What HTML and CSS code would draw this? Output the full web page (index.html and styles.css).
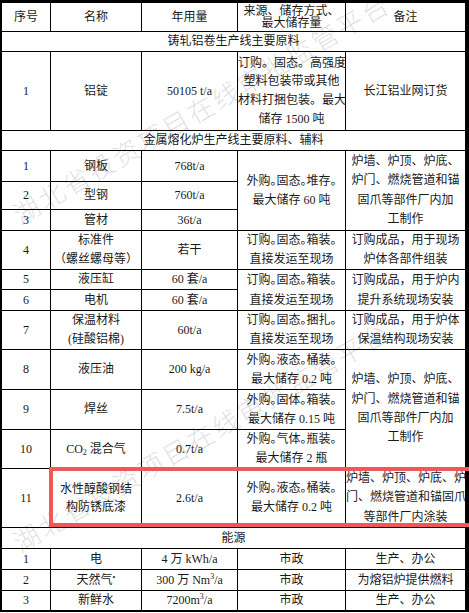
FILE: index.html
```html
<!DOCTYPE html>
<html lang="zh-CN">
<head>
<meta charset="utf-8">
<title>原辅材料表</title>
<link rel="stylesheet" href="styles.css">
</head>
<body>
<div class="page">
  <div class="wm wm1">湖北省投资项目在线审批监管平台</div>
  <div class="wm wm2">湖北省投资项目在线审批监管平台</div>
  <table class="tbl">
    <tr class="h29">
      <td class="w1">序号</td><td class="w2">名称</td><td class="w3">年用量</td><td class="w4 hd2">来源、储存方式、<br>最大储存量</td><td class="w5">备注</td>
    </tr>
    <tr class="h20"><td colspan="5">铸轧铝卷生产线主要原料</td></tr>
    <tr class="h79">
      <td>1</td><td>铝锭</td><td>50105 t/a</td>
      <td class="lh187">订购。固态。高强度<br>塑料包装带或其他<br>材料打捆包装。最大<br>储存 1500 吨</td>
      <td>长江铝业网订货</td>
    </tr>
    <tr class="h20"><td colspan="5">金属熔化炉生产线主要原料、辅料</td></tr>
    <tr class="h31">
      <td>1</td><td>钢板</td><td>768t/a</td>
      <td rowspan="3" class="cmp">外购。固态。堆存。<br>最大储存 60 吨</td>
      <td rowspan="3" class="lh193">炉墙、炉顶、炉底、<br>炉门、燃烧管道和锚<br>固爪等部件厂内加<br>工制作</td>
    </tr>
    <tr class="h28"><td>2</td><td>型钢</td><td>760t/a</td></tr>
    <tr class="h21"><td>3</td><td>管材</td><td>36t/a</td></tr>
    <tr class="h39">
      <td>4</td><td>标准件<br>（螺丝螺母等）</td><td>若干</td>
      <td class="cmp">订购。固态。箱装。<br>直接发运至现场</td>
      <td>订购成品，用于现场<br>炉体各部件组装</td>
    </tr>
    <tr class="h20">
      <td>5</td><td>液压缸</td><td>60 套/a</td>
      <td rowspan="2" class="cmp lh20">订购。固态。箱装。<br>直接发运至现场</td>
      <td rowspan="2" class="lh20">订购成品，用于炉内<br>提升系统现场安装</td>
    </tr>
    <tr class="h21"><td>6</td><td>电机</td><td>60 套/a</td></tr>
    <tr class="h39">
      <td>7</td><td>保温材料<br>(硅酸铝棉)</td><td>60t/a</td>
      <td class="cmp">订购。固态。捆扎。<br>直接发运至现场</td>
      <td>订购成品，用于炉体<br>保温结构现场安装</td>
    </tr>
    <tr class="h40">
      <td>8</td><td>液压油</td><td>200 kg/a</td>
      <td class="cmp">外购。液态。桶装。<br>最大储存 0.2 吨</td>
      <td rowspan="3" class="lh193">炉墙、炉顶、炉底、<br>炉门、燃烧管道和锚<br>固爪等部件厂内加<br>工制作</td>
    </tr>
    <tr class="h40">
      <td>9</td><td>焊丝</td><td>7.5t/a</td>
      <td class="cmp">外购。固体。箱装。<br>最大储存 0.15 吨</td>
    </tr>
    <tr class="h39">
      <td>10</td><td>CO<sub>2</sub> 混合气</td><td>0.7t/a</td>
      <td class="cmp">外购。气体。瓶装。<br>最大储存 2 瓶</td>
    </tr>
    <tr class="h59">
      <td>11</td><td class="lh18">水性醇酸钢结<br>构防锈底漆</td><td>2.6t/a</td>
      <td class="cmp">外购。液态。桶装。<br>最大储存 0.2 吨</td>
      <td class="ovf"><span class="ln">炉墙、炉顶、炉底、炉</span><span class="ln">门、燃烧管道和锚固爪</span><span class="ln ctr">等部件厂内涂装</span></td>
    </tr>
    <tr class="h21"><td colspan="5">能源</td></tr>
    <tr class="h21"><td>1</td><td>电</td><td>4 万 kWh/a</td><td>市政</td><td>生产、办公</td></tr>
    <tr class="h21"><td>2</td><td>天然气<sup class="star">•</sup></td><td>300 万 Nm<sup>3</sup>/a</td><td>市政</td><td>为熔铝炉提供燃料</td></tr>
    <tr class="h19"><td>3</td><td>新鲜水</td><td>7200m<sup>3</sup>/a</td><td>市政</td><td>生产、办公</td></tr>
  </table>
  <div class="hl"></div>
</div>
</body>
</html>
```
FILE: styles.css
```css
html, body {
  margin: 0;
  padding: 0;
  background: #fff;
}

.page {
  position: relative;
  width: 469px;
  height: 613px;
  overflow: hidden;
  background: #fff;
}

.wm {
  position: absolute;
  left: -14px;
  width: 430px;
  height: 30px;
  line-height: 30px;
  text-align: center;
  white-space: nowrap;
  font-family: "Noto Sans CJK SC", sans-serif;
  font-size: 26px;
  font-weight: 300;
  letter-spacing: 2.7px;
  color: rgba(0, 0, 0, 0.14);
  transform: rotate(-30deg);
  z-index: 0;
}
.wm1 { top: 93px; }
.wm2 { top: 421px; }

.tbl {
  position: relative;
  z-index: 1;
  width: 469px;
  table-layout: fixed;
  border-collapse: separate;
  border-spacing: 0;
  border-style: solid;
  border-color: #000;
  border-width: 3px 3px 1px 2px;
  box-sizing: border-box;
  font-family: "Liberation Serif", "Noto Sans CJK SC", serif;
  font-size: 12px;
  color: #1a1a1a;
}

.tbl td {
  box-sizing: border-box;
  padding: 0;
  border-right: 1px solid #000;
  border-bottom: 1px solid #000;
  text-align: center;
  vertical-align: middle;
  line-height: 19px;
  white-space: nowrap;
  overflow: visible;
}

.w1 { width: 49px; }
.w2 { width: 91px; }
.w3 { width: 96px; }
.w4 { width: 108px; }
.w5 { width: 120px; }

.h19 { height: 19px; }
.h20 { height: 20px; }
.h21 { height: 21px; }
.h28 { height: 28px; }
.h29 { height: 29px; }
.h31 { height: 31px; }
.h39 { height: 39px; }
.h40 { height: 40px; }
.h59 { height: 59px; }
.h79 { height: 79px; }

.tbl td.hd2 { line-height: 12.5px; }
.tbl td.lh187 { line-height: 18.7px; }
.tbl td.lh193 { line-height: 19.3px; }
.tbl td.lh20 { line-height: 20px; }
.tbl td.lh18 { line-height: 18px; }

.cmp {
  font-feature-settings: "halt";
}

.tbl td.ovf {
  line-height: 19.3px;
}
.ln {
  display: block;
  text-align: left;
  height: 19.3px;
}
.ln.ctr {
  text-align: center;
}

sub, sup {
  line-height: 0;
  font-size: 8px;
}
sub { vertical-align: -2px; }
sup { vertical-align: 5px; }
sup.star { font-size: 8px; vertical-align: 4px; }

.hl {
  position: absolute;
  z-index: 2;
  left: 49px;
  top: 467px;
  width: 440px;
  height: 60px;
  box-sizing: border-box;
  border: 4px solid #f25757;
}
```
